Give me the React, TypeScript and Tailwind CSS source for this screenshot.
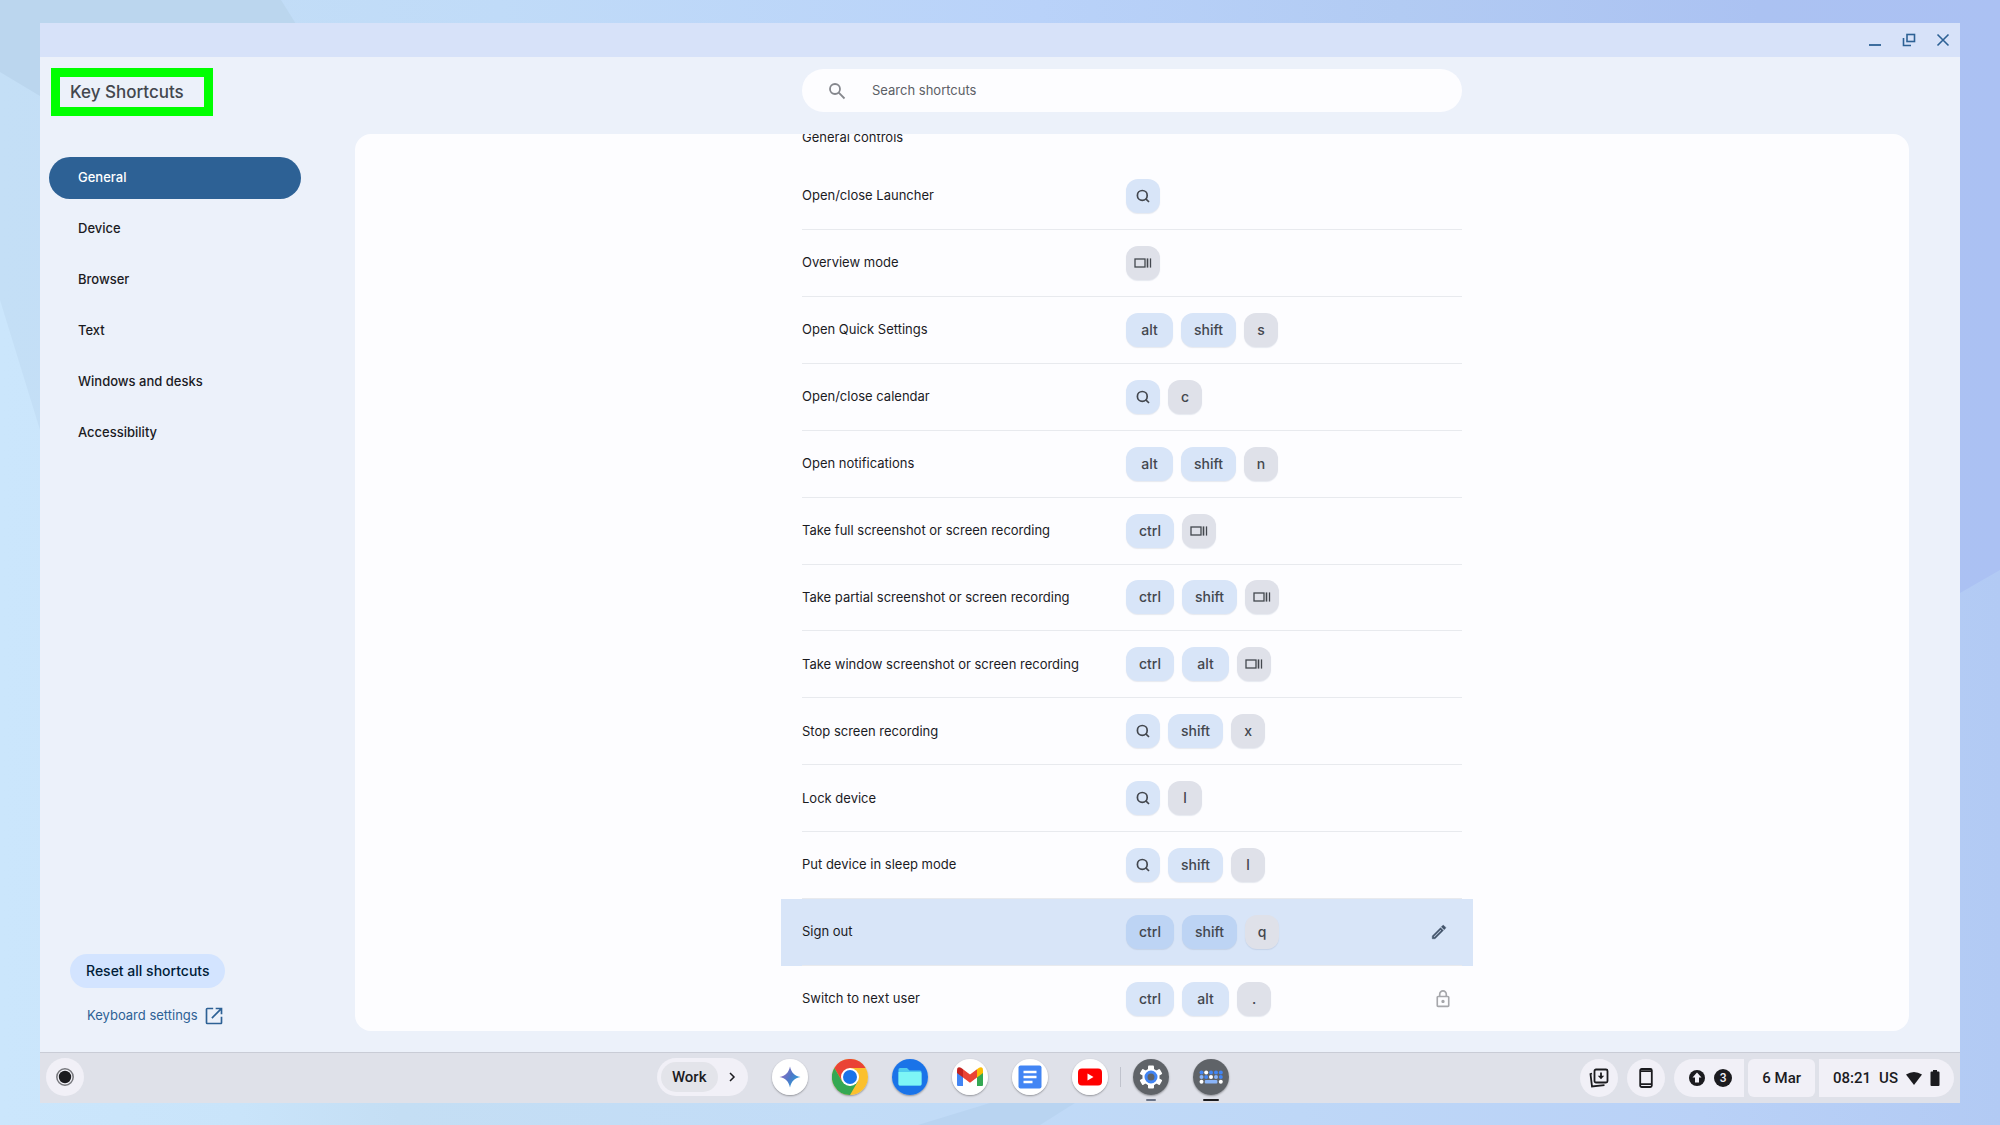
import { useState } from "react";
import type { ReactNode } from "react";

const categories = ["General", "Device", "Browser", "Text", "Windows and desks", "Accessibility"];

type Action = "edit" | "locked";

interface Shortcut {
  label: string;
  keys: string[];
  action?: Action;
}

const shortcuts: Shortcut[] = [
  { label: "Open/close Launcher", keys: ["launcher"] },
  { label: "Overview mode", keys: ["overview"] },
  { label: "Open Quick Settings", keys: ["alt", "shift", "s"] },
  { label: "Open/close calendar", keys: ["launcher", "c"] },
  { label: "Open notifications", keys: ["alt", "shift", "n"] },
  { label: "Take full screenshot or screen recording", keys: ["ctrl", "overview"] },
  { label: "Take partial screenshot or screen recording", keys: ["ctrl", "shift", "overview"] },
  { label: "Take window screenshot or screen recording", keys: ["ctrl", "alt", "overview"] },
  { label: "Stop screen recording", keys: ["launcher", "shift", "x"] },
  { label: "Lock device", keys: ["launcher", "l"] },
  { label: "Put device in sleep mode", keys: ["launcher", "shift", "l"] },
  { label: "Sign out", keys: ["ctrl", "shift", "q"], action: "edit" },
  { label: "Switch to next user", keys: ["ctrl", "alt", "."], action: "locked" },
];

const modifiers = ["launcher", "ctrl", "alt", "shift"];

function Wallpaper() {
  return (
    <svg
      className="absolute inset-0 h-full w-full"
      viewBox="0 0 2000 1125"
      preserveAspectRatio="none"
      aria-hidden="true"
    >
      <defs>
        <linearGradient id="sky" x1="0" y1="0" x2="1" y2="0">
          <stop offset="0" stopColor="#c4dff6" />
          <stop offset="0.25" stopColor="#c0dbf8" />
          <stop offset="0.52" stopColor="#b9d2f9" />
          <stop offset="0.7" stopColor="#b2cbf3" />
          <stop offset="0.88" stopColor="#abc2f2" />
          <stop offset="1" stopColor="#abc1f3" />
        </linearGradient>
        <linearGradient id="ground" x1="0" y1="0" x2="1" y2="0">
          <stop offset="0" stopColor="#cbe6fc" />
          <stop offset="0.12" stopColor="#c9e4fa" />
          <stop offset="0.2" stopColor="#c4def4" />
          <stop offset="0.42" stopColor="#c2dcf7" />
          <stop offset="0.65" stopColor="#bed7f7" />
          <stop offset="0.85" stopColor="#b9d1f7" />
          <stop offset="1" stopColor="#b2caf4" />
        </linearGradient>
      </defs>
      <rect width="2000" height="1125" fill="url(#sky)" />
      <path d="M0 0H281L296 24L40 96L0 72Z" fill="#bbd6ee" />
      <path d="M0 300L40 430L1960 593L2000 570V1125H0Z" fill="url(#ground)" />
      <path d="M990 1103H1075L1040 1125H918Z" fill="#b9d4f1" />
    </svg>
  );
}

function LauncherIcon() {
  return (
    <svg width="16" height="16" viewBox="0 0 16 16" fill="none" stroke="#43474e" strokeWidth="1.7" role="img" aria-label="launcher">
      <circle cx="7.3" cy="7.4" r="4.9" />
      <path d="M10.6 10.7L14 14" />
    </svg>
  );
}

function OverviewIcon() {
  return (
    <svg width="18" height="12" viewBox="0 0 18 12" fill="none" stroke="#43474e" role="img" aria-label="overview">
      <rect x="1" y="2" width="10" height="8" strokeWidth="1.3" />
      <path d="M13.5 1.4V10.6" strokeWidth="1.6" />
      <path d="M16.5 1.4V10.6" strokeWidth="1.3" />
    </svg>
  );
}

function Key({ name, active }: { name: string; active: boolean }) {
  let color = "bg-[#dfe1e9]";
  if (modifiers.includes(name)) color = active ? "bg-[#bdd4f4]" : "bg-[#d8e5f8]";

  let content: ReactNode = name;
  if (name === "launcher") content = <LauncherIcon />;
  if (name === "overview") content = <OverviewIcon />;

  const isWord = name.length > 1 && typeof content === "string";

  return (
    <kbd
      className={`flex h-[34px] items-center justify-center rounded-xl font-[Inter,sans-serif] text-sm font-medium text-[#43474e] shadow-[0_1px_1px_rgba(60,80,120,0.12)] ${
        isWord ? "min-w-[47px] px-[13px]" : "min-w-[34px]"
      } ${color}`}
    >
      {content}
    </kbd>
  );
}

function ShortcutRow({ shortcut }: { shortcut: Shortcut }) {
  const active = shortcut.action === "edit";
  return (
    <li className={`group -mr-[11px] -ml-[21px] pr-[11px] pl-[21px] ${active ? "bg-[#d8e5f8]" : ""}`}>
      <div className="flex h-full items-center border-b border-[#e8eaee] group-last:border-transparent">
        <span className="w-[324px] shrink-0">{shortcut.label}</span>
        <span className="flex gap-2">
          {shortcut.keys.map((k) => (
            <Key key={k} name={k} active={active} />
          ))}
        </span>
        {shortcut.action === "edit" && (
          <button type="button" aria-label="Edit shortcut" className="mr-3.5 ml-auto">
            <svg width="18" height="18" viewBox="0 0 24 24" fill="#43546b" stroke="#43546b" strokeWidth="0.6">
              <path d="M14.06 9.02l.92.92L5.92 19H5v-.92l9.06-9.06M17.66 3c-.25 0-.51.1-.7.29l-1.83 1.83 3.75 3.75 1.83-1.83a.996.996 0 0 0 0-1.41l-2.34-2.34c-.2-.2-.45-.29-.71-.29zm-3.6 3.19L3 17.25V21h3.75L17.81 9.94l-3.75-3.75z" />
            </svg>
          </button>
        )}
        {shortcut.action === "locked" && (
          <svg className="mr-2.5 ml-auto" width="18" height="20" viewBox="1 0 22 24" fill="#a6a7ab" role="img" aria-label="Locked">
            <path d="M18 8h-1V6c0-2.76-2.24-5-5-5S7 3.24 7 6v2H6c-1.1 0-2 .9-2 2v10c0 1.1.9 2 2 2h12c1.1 0 2-.9 2-2V10c0-1.1-.9-2-2-2zM9 6c0-1.66 1.34-3 3-3s3 1.34 3 3v2H9V6zm9 14H6V10h12v10zm-6-3c1.1 0 2-.9 2-2s-.9-2-2-2-2 .9-2 2 .9 2 2 2z" />
          </svg>
        )}
      </div>
    </li>
  );
}

function TitleBar() {
  return (
    <div className="flex h-[34px] shrink-0 items-center justify-end gap-5 bg-[#d7e2f9] pr-2.5 text-[#2d6195]">
      <button type="button" aria-label="Minimize">
        <svg width="14" height="14" viewBox="0 0 14 14" fill="none" stroke="currentColor" strokeWidth="1.8">
          <path d="M1 12H13" />
        </svg>
      </button>
      <button type="button" aria-label="Restore">
        <svg width="14" height="14" viewBox="0 0 14 14" fill="none" stroke="currentColor" strokeWidth="1.6">
          <rect x="5" y="1.5" width="7.5" height="7" />
          <path d="M1.5 5V12.5H9" />
        </svg>
      </button>
      <button type="button" aria-label="Close">
        <svg width="14" height="14" viewBox="0 0 14 14" fill="none" stroke="currentColor" strokeWidth="1.6">
          <path d="M1.5 1.5L12.5 12.5M12.5 1.5L1.5 12.5" />
        </svg>
      </button>
    </div>
  );
}

function Sidebar() {
  const [selected, setSelected] = useState("General");
  return (
    <aside className="flex w-[315px] shrink-0 flex-col">
      <div className="mt-[11px] ml-[11px] flex h-12 w-[162px] items-center border-[9px] border-[#00ff00] pl-[10px]">
        <h1 className="text-[17px] leading-none font-medium whitespace-nowrap text-[#43474e]">Key Shortcuts</h1>
      </div>
      <nav className="mt-[41px] ml-[9px] flex w-[252px] flex-col gap-[9px]">
        {categories.map((c) => (
          <button
            key={c}
            type="button"
            onClick={() => setSelected(c)}
            className={`h-[42px] rounded-full px-[29px] text-left font-medium ${
              c === selected ? "bg-[#2d6195] text-white" : "text-[#1b1b1f]"
            }`}
          >
            {c}
          </button>
        ))}
      </nav>
      <div className="mt-auto mb-[26px] ml-[30px] flex flex-col items-start gap-[18px]">
        <button type="button" className="h-[34px] rounded-full bg-[#d3e4ff] px-4 text-sm font-medium text-[#001c38]">
          Reset all shortcuts
        </button>
        <a href="#keyboard" className="flex items-center gap-1.5 pl-[17px] text-[#2d6195]">
          Keyboard settings
          <svg width="20" height="20" viewBox="0 0 24 24" fill="currentColor" aria-hidden="true">
            <path d="M20 20H4V4h7V2H4a2 2 0 0 0-2 2v16a2 2 0 0 0 2 2h16c1.1 0 2-.9 2-2v-7h-2v7zM14 2v2h4.59l-9.83 9.83 1.41 1.41L20 5.41V10h2V2h-8z" />
          </svg>
        </a>
      </div>
    </aside>
  );
}

function AppIcon({ label, indicator, children }: { label: string; indicator?: string; children: ReactNode }) {
  return (
    <button type="button" aria-label={label} className="relative size-9 rounded-full shadow-[0_1px_2px_rgba(0,0,0,0.35)]">
      <svg width="36" height="36" viewBox="0 0 36 36">{children}</svg>
      {indicator && <span className={`absolute -bottom-1.5 left-1/2 h-0.5 -translate-x-1/2 rounded-full ${indicator}`} />}
    </button>
  );
}

function ShelfApps() {
  return (
    <div className="flex items-center gap-6 pb-0.5">
      <AppIcon label="Gemini">
        <defs>
          <linearGradient id="gem" x1="0" y1="0.2" x2="1" y2="0.8">
            <stop offset="0.1" stopColor="#8e6fc0" />
            <stop offset="0.5" stopColor="#4f78c8" />
            <stop offset="0.9" stopColor="#2aa0d8" />
          </linearGradient>
        </defs>
        <circle cx="18" cy="18" r="18" fill="#fff" />
        <path d="M18 7.5C19.4 13.8 22.2 16.6 28.5 18C22.2 19.4 19.4 22.2 18 28.5C16.6 22.2 13.8 19.4 7.5 18C13.8 16.6 16.6 13.8 18 7.5Z" fill="url(#gem)" />
      </AppIcon>
      <AppIcon label="Chrome">
        <circle cx="18" cy="18" r="18" fill="#fbc02d" />
        <path d="M18 9H33.6A18 18 0 0 0 2.4 9L10.2 22.5Z" fill="#ea4335" />
        <path d="M2.4 9L10.2 22.5L18 27L25.8 22.5L18 36A18 18 0 0 1 2.4 9Z" fill="#34a853" />
        <circle cx="18" cy="18" r="9" fill="#fff" />
        <circle cx="18" cy="18" r="7" fill="#1a73e8" />
      </AppIcon>
      <AppIcon label="Files">
        <circle cx="18" cy="18" r="18" fill="#1a73e8" />
        <path d="M8 9H15L17.5 11.5H28A1.5 1.5 0 0 1 29.5 13V25A1.5 1.5 0 0 1 28 26.5H8A1.5 1.5 0 0 1 6.5 25V10.5A1.5 1.5 0 0 1 8 9Z" fill="#4fcbee" />
        <path d="M6.5 13H28A1.5 1.5 0 0 1 29.5 14.5V25A1.5 1.5 0 0 1 28 26.5H8A1.5 1.5 0 0 1 6.5 25Z" fill="#7df5f6" />
      </AppIcon>
      <AppIcon label="Gmail">
        <circle cx="18" cy="18" r="18" fill="#fff" />
        <path d="M5 12V26Q5 27 6 27H11V15Z" fill="#4285f4" />
        <path d="M31 12V26Q31 27 30 27H25V15Z" fill="#34a853" />
        <path d="M25 10.3L27 8.7Q31 7 31 11.5V14L25 18.5Z" fill="#fbbc04" />
        <path d="M11 10.3L9 8.7Q5 7 5 11.5V14L11 18.5Z" fill="#c5221f" />
        <path d="M11 10.3L18 15.6L25 10.3V18.5L18 23.8L11 18.5Z" fill="#ea4335" />
      </AppIcon>
      <AppIcon label="Docs">
        <circle cx="18" cy="18" r="18" fill="#fff" />
        <rect x="6.5" y="6.5" width="23" height="23" rx="2" fill="#4285f4" />
        <path d="M11.5 13H24.5M11.5 18H24.5M11.5 23H20.5" stroke="#fff" strokeWidth="2.3" />
      </AppIcon>
      <AppIcon label="YouTube">
        <circle cx="18" cy="18" r="18" fill="#fff" />
        <rect x="6" y="9.5" width="24" height="17" rx="4" fill="#f00" />
        <path d="M15.5 14.5V21.5L21.5 18Z" fill="#fff" />
      </AppIcon>
      <span className="-mx-3 h-5 w-px bg-[#c0c3cd]" />
      <AppIcon label="Settings" indicator="w-2.5 bg-[#6b7487]">
        <circle cx="18" cy="18" r="18" fill="#5f6368" />
        <g fill="#fff">
          <rect x="15" y="6.5" width="6" height="23" rx="1" />
          <rect x="15" y="6.5" width="6" height="23" rx="1" transform="rotate(60 18 18)" />
          <rect x="15" y="6.5" width="6" height="23" rx="1" transform="rotate(120 18 18)" />
          <circle cx="18" cy="18" r="8.6" />
        </g>
        <circle cx="18" cy="18" r="5" fill="#5f6368" stroke="#4285f4" strokeWidth="3" />
      </AppIcon>
      <AppIcon label="Key Shortcuts" indicator="w-4 bg-[#1b1b1f]">
        <circle cx="18" cy="18" r="18" fill="#5f6368" />
        <g fill="#4285f4">
          <circle cx="8.5" cy="13.5" r="2" />
          <circle cx="18" cy="13.5" r="2" />
          <circle cx="23" cy="13.5" r="2" />
          <circle cx="27.8" cy="13.5" r="2" />
          <circle cx="13.2" cy="18" r="2" />
          <circle cx="27.8" cy="18" r="2" />
        </g>
        <g fill="#8ab4f8">
          <circle cx="8.5" cy="18" r="2" />
          <circle cx="23" cy="18" r="2" />
          <rect x="11.8" y="21" width="12.6" height="3.6" rx="1" />
        </g>
        <g fill="#fff">
          <circle cx="13.2" cy="13.5" r="2" />
          <circle cx="18" cy="18" r="2" />
          <circle cx="8.5" cy="22.8" r="2" />
          <circle cx="27.8" cy="22.8" r="2" />
        </g>
      </AppIcon>
    </div>
  );
}

function StatusArea() {
  return (
    <div className="flex items-center justify-end text-[15px] font-medium">
      <button type="button" aria-label="Holding space" className="mr-[9px] flex size-[38px] items-center justify-center rounded-full bg-[#f1f0f7]">
        <svg width="20" height="20" viewBox="0 0 20 20" fill="none" stroke="#1b1b1f" strokeWidth="1.8">
          <rect x="5.5" y="1.5" width="13" height="13" rx="1.5" />
          <path d="M12 4.5V9.5" />
          <path d="M8.8 7.7H15.2L12 11.2Z" fill="#1b1b1f" stroke="none" />
          <path d="M3 5.5L1.5 6L3 18.5L15.5 17.2" />
        </svg>
      </button>
      <button type="button" aria-label="Phone hub" className="mr-[9px] flex size-[38px] items-center justify-center rounded-full bg-[#f1f0f7]">
        <svg width="14" height="20" viewBox="0 0 14 20" fill="none" stroke="#1b1b1f" strokeWidth="1.8">
          <rect x="1.2" y="1" width="11.6" height="18" rx="1.5" />
          <path d="M1 3.2H13M1 16.2H13" />
        </svg>
      </button>
      <button type="button" aria-label="Notifications" className="mr-1 flex h-[38px] items-center gap-2 rounded-l-full rounded-r-md bg-[#f1f0f7] pr-3 pl-3.5">
        <svg width="18" height="18" viewBox="0 0 18 18">
          <circle cx="9" cy="9" r="8" fill="#1b1b1f" />
          <path d="M9 3.5L13.5 8.5H11V13.5H7V8.5H4.5Z" fill="#f1f0f7" />
        </svg>
        <span className="flex size-[18px] items-center justify-center rounded-full bg-[#1b1b1f] text-xs text-[#f1f0f7]">3</span>
      </button>
      <button type="button" className="mr-1 h-[38px] rounded-md bg-[#f1f0f7] px-3.5">6 Mar</button>
      <button type="button" className="mr-1.5 flex h-[38px] items-center gap-2 rounded-l-md rounded-r-full bg-[#f1f0f7] px-3.5">
        <span>08:21</span>
        <span>US</span>
        <svg width="16" height="14" viewBox="1 0 16 14" fill="#1b1b1f" role="img" aria-label="Wi-Fi">
          <path d="M9 14L1 3.5Q9 -1.5 17 3.5Z" />
        </svg>
        <svg width="10" height="16" viewBox="0 0 10 16" fill="#1b1b1f" role="img" aria-label="Battery">
          <path d="M3 0H7V1.5H8.5Q9.5 1.5 9.5 2.5V15Q9.5 16 8.5 16H1.5Q.5 16 .5 15V2.5Q.5 1.5 1.5 1.5H3Z" />
        </svg>
      </button>
    </div>
  );
}

function Shelf() {
  return (
    <footer className="grid h-[51px] shrink-0 grid-cols-[1fr_auto_1fr] items-center border-t border-[#c9ccd6] bg-[#dfe1e9] font-[Roboto,sans-serif] text-[#1b1b1f]">
      <div className="flex items-center justify-between pr-6 pb-0.5 pl-1.5">
        <button type="button" aria-label="Launcher" className="flex size-[38px] items-center justify-center rounded-full bg-[#f1f0f7]">
          <svg width="18" height="18" viewBox="0 0 18 18">
            <circle cx="9" cy="9" r="8.2" fill="none" stroke="#77787d" strokeWidth="1.5" />
            <circle cx="9" cy="9" r="6.2" fill="#1b1b1f" />
          </svg>
        </button>
        <button type="button" className="flex h-[38px] items-center rounded-full bg-[#f1f0f7] p-1 pr-3">
          <span className="flex h-[30px] items-center rounded-full bg-[#e3e4ea] px-[11px] text-[15px] font-medium">Work</span>
          <svg className="ml-2.5" width="8" height="10" viewBox="0 0 8 10" fill="none" stroke="#1b1b1f" strokeWidth="1.5">
            <path d="M2 1L6 5L2 9" />
          </svg>
        </button>
      </div>
      <ShelfApps />
      <StatusArea />
    </footer>
  );
}

export default function App() {
  return (
    <div className="relative flex h-screen flex-col overflow-hidden px-10 pt-[23px] pb-[22px] font-[Inter,sans-serif] text-[13px] text-[#1b1b1f]">
      <Wallpaper />
      <div className="relative flex min-h-0 flex-1 flex-col bg-[#ecf1fa]">
        <TitleBar />
        <div className="flex min-h-0 flex-1">
          <Sidebar />
          <main className="mr-[51px] mb-[21px] flex min-w-0 flex-1 flex-col">
            <div className="flex h-[77px] shrink-0 justify-center pt-3">
              <label className="flex h-[43px] w-[660px] items-center rounded-full bg-[#fdfdff] px-[26px]">
                <svg width="18" height="18" viewBox="0 0 18 18" fill="none" stroke="#85878d" strokeWidth="1.8" aria-hidden="true">
                  <circle cx="7" cy="7" r="5" />
                  <path d="M10.7 10.7L16.5 16.5" />
                </svg>
                <input
                  type="search"
                  aria-label="Search shortcuts"
                  placeholder="Search shortcuts"
                  className="ml-[26px] flex-1 bg-transparent outline-none placeholder:text-[#5c5f66]"
                />
              </label>
            </div>
            <section className="flex min-h-0 flex-1 flex-col items-center overflow-hidden rounded-2xl bg-[#fdfdff]">
              <div className="-mt-[7px] -mb-0.5 flex min-h-0 flex-1 flex-col">
                <h2 className="mb-4 h-5 leading-5">General controls</h2>
                <ul className="grid w-[660px] flex-1 auto-rows-fr">
                  {shortcuts.map((s) => (
                    <ShortcutRow key={s.label} shortcut={s} />
                  ))}
                </ul>
              </div>
            </section>
          </main>
        </div>
        <Shelf />
      </div>
    </div>
  );
}
